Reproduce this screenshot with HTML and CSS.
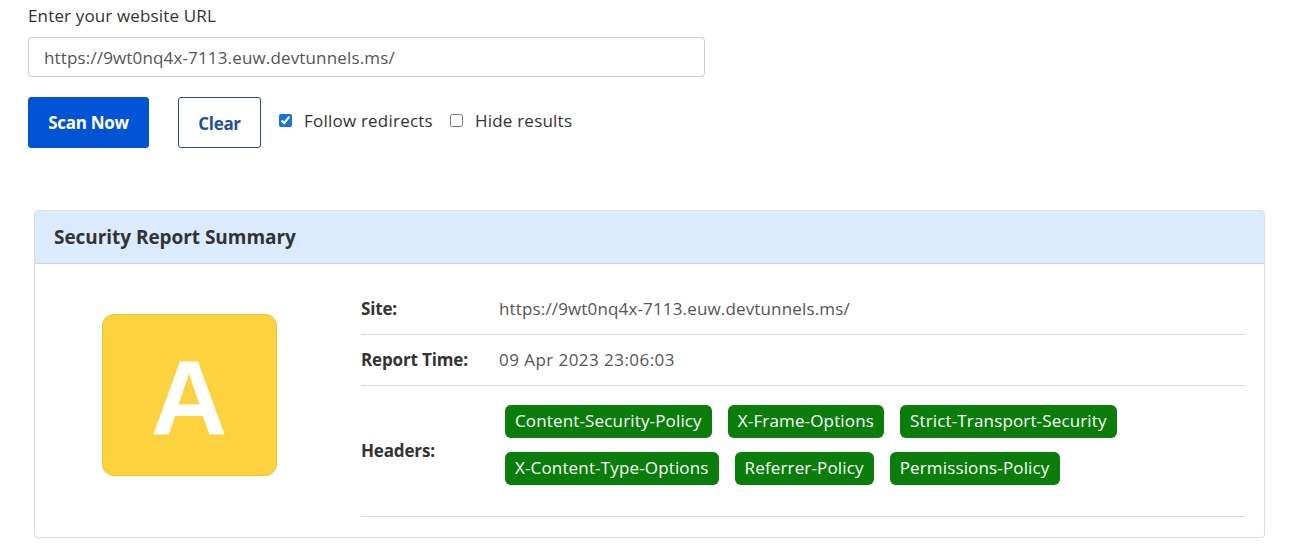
FILE: index.html
```html
<!DOCTYPE html>
<html lang="en">
<head>
<meta charset="utf-8">
<title>Security Report</title>
<link rel="stylesheet" href="styles.css">
</head>
<body>
<div class="page">
  <form class="scan-form">
    <label class="url-label" for="url">Enter your website URL</label>
    <input class="url-input" id="url" type="text" value="https://9wt0nq4x-7113.euw.devtunnels.ms/">
    <div class="actions">
      <button type="button" class="btn btn-primary">Scan Now</button>
      <button type="button" class="btn btn-outline">Clear</button>
      <label class="check"><input type="checkbox" checked><span>Follow redirects</span></label>
      <label class="check"><input type="checkbox"><span>Hide results</span></label>
    </div>
  </form>

  <section class="card">
    <div class="card-header">Security Report Summary</div>
    <div class="card-body">
      <div class="grade-col">
        <div class="grade">A</div>
      </div>
      <div class="report">
        <div class="row">
          <div class="key">Site:</div>
          <div class="val">https://9wt0nq4x-7113.euw.devtunnels.ms/</div>
        </div>
        <div class="row">
          <div class="key">Report Time:</div>
          <div class="val val-time">09 Apr 2023 23:06:03</div>
        </div>
        <div class="row row-headers">
          <div class="key">Headers:</div>
          <div class="val badges">
            <span class="badge">Content-Security-Policy</span>
            <span class="badge">X-Frame-Options</span>
            <span class="badge">Strict-Transport-Security</span>
            <span class="badge">X-Content-Type-Options</span>
            <span class="badge">Referrer-Policy</span>
            <span class="badge">Permissions-Policy</span>
          </div>
        </div>
      </div>
    </div>
  </section>
</div>
</body>
</html>
```
FILE: styles.css
```css
* { box-sizing: border-box; }
html, body { margin: 0; background: #fff; }
body {
  font-family: "Open Sans", "Noto Sans", sans-serif;
  font-size: 17px;
  letter-spacing: 0.15px;
  line-height: 24px;
  color: #333;
}
.page { padding: 4px 28px 0 28px; }
.scan-form { display: flex; flex-direction: column; align-items: flex-start; }
.url-label { color: #333; }
.url-input {
  margin-top: 9px;
  width: 677px;
  height: 40px;
  border: 1px solid #ccc;
  border-radius: 4px;
  padding: 0 15px;
  font: inherit;
  letter-spacing: 0.15px;
  color: #555;
  outline: none;
}
.actions {
  display: flex;
  align-items: center;
  margin-top: 20px;
  height: 51px;
}
.btn {
  height: 51px;
  border-radius: 3px;
  font-family: "Open Sans", sans-serif;
  font-weight: bold;
  font-size: 17px;
  letter-spacing: -0.3px;
  cursor: pointer;
}
.btn-primary {
  width: 121px;
  background: #0254d4;
  border: 1px solid #0254d4;
  color: #fff;
}
.btn-outline {
  margin-left: 29px;
  width: 83px;
  background: #fff;
  border: 1px solid #2a4d72;
  color: #1f5099;
  padding-top: 3px;
}
.check {
  display: flex;
  align-items: center;
  margin-left: 17px;
  margin-top: -4px;
  color: #333;
  font-size: 17px;
  letter-spacing: 0.22px;
}
.check input {
  margin: 0 12px 0 0;
  width: 13px;
  height: 13px;
  accent-color: #1a73d9;
}
.check:first-of-type { margin-left: 18px; }
.card {
  margin: 62px 11px 0 6px;
  border: 1px solid #dcdcdc;
  border-radius: 4px;
  overflow: hidden;
}
.card-header {
  background: #dcebfb;
  border-bottom: 1px solid #c9d6e3;
  padding: 14px 19px;
  height: 53px;
  font-weight: bold;
  font-size: 19px;
  letter-spacing: -0.05px;
  line-height: 24px;
  color: #333;
}
.card-body {
  display: flex;
  padding: 20px 19px 0 0;
}
.grade-col {
  width: 307px;
  margin-right: 19px;
  display: flex;
  justify-content: center;
  align-items: flex-start;
  padding-top: 30px;
}
.grade {
  width: 175px;
  height: 162px;
  margin-left: 1px;
  background: #fdd23f;
  border: 1px solid #f1c12d;
  border-radius: 12px;
  color: #fff;
  font-family: "Liberation Sans", Arial, sans-serif;
  font-weight: bold;
  font-size: 106px;
  letter-spacing: 0;
  display: flex;
  align-items: center;
  justify-content: center;
  padding-top: 6px;
}
.report { flex: 1; padding-bottom: 20px; }
.row {
  display: flex;
  align-items: center;
  border-bottom: 1px solid #d9d9d9;
  padding: 13px 0 13px 0;
}
.key {
  width: 138px;
  font-weight: bold;
  letter-spacing: -0.15px;
  color: #333;
}
.val { color: #555; }
.val-time { letter-spacing: 0.45px; }
.row-headers { padding: 12px 0; }
.badges {
  display: flex;
  flex-wrap: wrap;
  gap: 14px 16px;
  padding: 7px 0 19px 6px;
  width: 640px;
  letter-spacing: 0.15px;
}
.badge {
  background: #0a7d0b;
  color: #fff;
  border-radius: 6px;
  padding: 4px 10px 5px;
  font-size: 17px;
  line-height: 24px;
}
```
